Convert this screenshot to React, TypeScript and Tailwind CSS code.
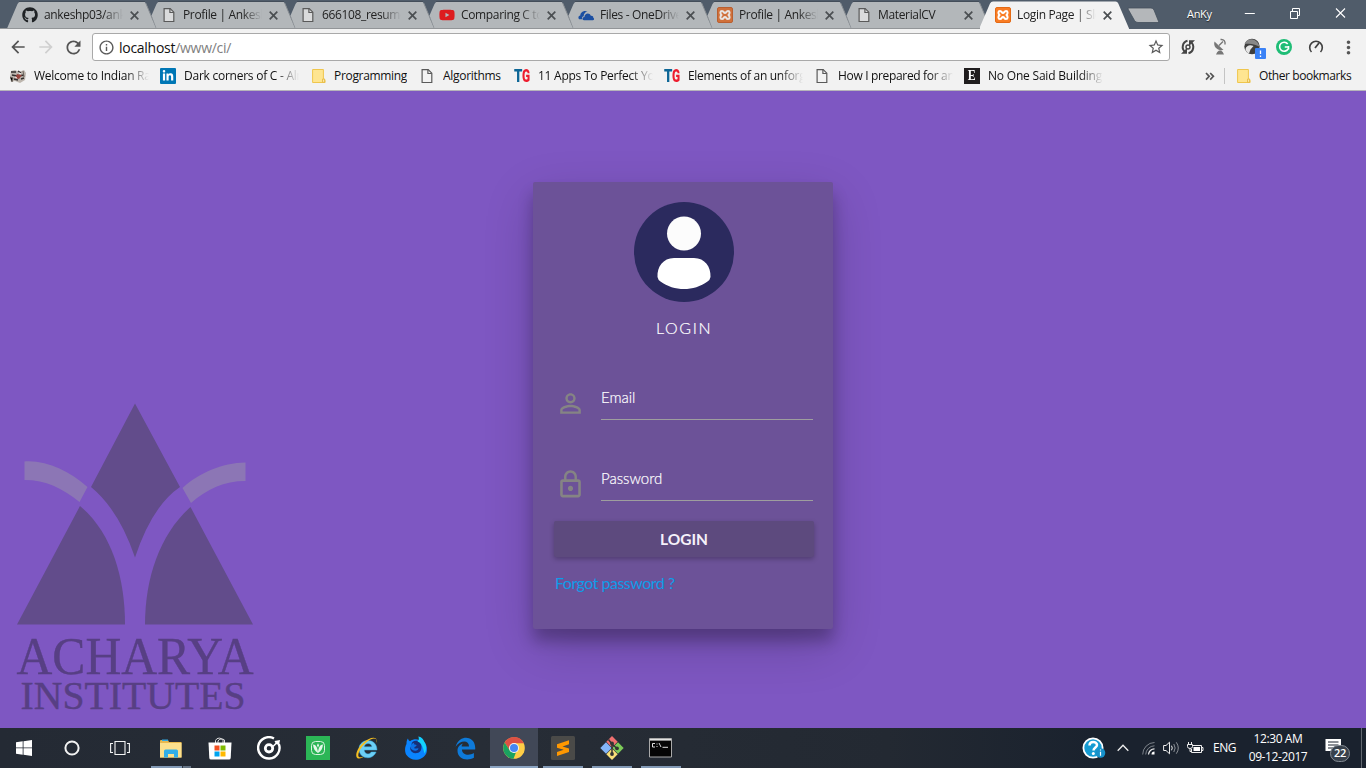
import React from "react";
import { FaGithub, FaYoutube, FaLinkedinIn } from "react-icons/fa";
import {
  MdArrowBack, MdArrowForward, MdRefresh, MdInfoOutline, MdStarBorder,
  MdMoreVert, MdPersonOutline, MdLockOutline,
} from "react-icons/md";

const UI = "font-['Open_Sans','Noto_Sans',sans-serif]";

const PageIcon = () => (
  <svg width="16" height="16" viewBox="0 0 16 16" fill="none" stroke="#5a5a5a" strokeWidth="1.2">
    <path d="M3.1 1.6h6.1l3.6 3.6v9.3H3.1z" fill="#f4f4f4" fillOpacity=".6" />
    <path d="M8.9 1.6v3.9h3.9" />
  </svg>
);

const Xampp = ({ dim = false }: { dim?: boolean }) => (
  <svg width="16" height="16" viewBox="0 0 16 16">
    <rect x=".5" y=".5" width="15" height="15" rx="1.5" fill={dim ? "#d0703a" : "#f97c24"} stroke={dim ? "#b95f30" : "#e46a15"} />
    <g fill="none" stroke={dim ? "#e8e4e1" : "#fff"} strokeWidth="2">
      <path d="M5 4c2 0 1.500 2 3 2s1-2 3-2 2 2.500.6 4c1.400 1.500 1.400 4-.6 4s-1.500-2-3-2-1 2-3 2-2-2.500-.6-4C3 6.500 3 4 5 4z" />
    </g>
  </svg>
);

const OneDrive = () => (
  <svg width="16" height="16" viewBox="0 0 16 16" fill="#1c4fa1">
    <path d="M1.800 12.300C-.3 12 .1 8.800 2.300 8.600 2.300 5.400 5.900 2.700 9.500 4.600 7 5 5.800 7 5.700 9.200c-1.700.4-2.100 2-1.400 3.100z" />
    <path d="M6 13.300c-2.200-.2-1.900-3.100.4-3.200.1-4.200 5.300-5 6.400-1.300 2.300-.2 2.600 1.300 2.400 2 1.300.5 1.100 2.500-.4 2.500z" />
  </svg>
);

const Folder = () => (
  <svg width="14" height="16" viewBox="0 0 14 16" className="ml-[2px]">
    <path d="M.6 1.500h10.800v9.300c1.300.1 1.700.8 1.700 1.800v1.900H.6z" fill="#fee591" stroke="#efc64d" />
    <path d="M10.500 14.300v-3.200h1.900v3.200z" fill="#fff0b5" stroke="#e3b43d" strokeWidth=".8" />
  </svg>
);

const tabs: { title: string; icon: React.ReactNode }[] = [
  { title: "ankeshp03/ankeshp", icon: <FaGithub size={16} color="#1f2225" /> },
  { title: "Profile | Ankesh P", icon: <PageIcon /> },
  { title: "666108_resume_A", icon: <PageIcon /> },
  { title: "Comparing C to m", icon: <FaYoutube size={16} color="#dd1c1f" /> },
  { title: "Files - OneDrive", icon: <OneDrive /> },
  { title: "Profile | Ankesh P", icon: <Xampp dim /> },
  { title: "MaterialCV", icon: <PageIcon /> },
  { title: "Login Page | Slee", icon: <Xampp /> },
];

function Tab({ i }: { i: number }) {
  const active = i === 7;
  const t = tabs[i];
  return (
    <div className={`relative h-[29px] w-[139px] shrink-0 ${active ? "z-[3]" : "z-[1]"}`}>
      <svg className="absolute left-0 top-0" width="152" height="29" viewBox="0 0 152 29">
        {active ? (
          <path d="M-1 29L10 3.500Q11 1.500 13 1.500H135.500Q137.500 1.500 138.300 3.500L149 28.500V29z" fill="#f2f2f2" />
        ) : (
          <>
            <path
              d={i === 0 ? "M0 28.500L10.500 4Q11.500 1.500 14 1.500H136Q138 1.500 139 3.500L149.500 28.500z" : "M5.500 15.500L10.500 4Q11.500 1.500 14 1.500H136Q138 1.500 139 3.500L149.500 28.500H10.500z"}
              fill="#b3b7ba"
            />
            <path d="M138.700 3L149.500 28.500" stroke="#868b90" fill="none" />
            <path d="M12 1.500H138" stroke="#434d59" strokeWidth="1" />
          </>
        )}
      </svg>
      <div className="relative flex h-[29px] items-center pl-[15px] pt-[1px]">
        <span className="flex w-[22px]">{t.icon}</span>
        <span className={`w-[79px] overflow-hidden whitespace-nowrap text-[12px] tracking-[-0.35px] text-[#222] [mask-image:linear-gradient(90deg,#000_75%,transparent)] ${UI}`}>
          {t.title}
        </span>
        <svg className="ml-[7px]" width="9" height="9" viewBox="0 0 9 9" stroke="#4b4f52" strokeWidth="1.700">
          <path d="M.7.7l7.600 7.600M8.300.7L.7 8.300" />
        </svg>
      </div>
    </div>
  );
}

const TG = () => (
  <span className="flex font-['Roboto',sans-serif] text-[18px] leading-[16px] font-black">
    <span className="inline-block w-[8px] origin-left scale-x-[.74] text-[#0d6696]">T</span>
    <span className="inline-block w-[8px] origin-left scale-x-[.66] text-[#ed1c2e]">G</span>
  </span>
);

const Train = () => (
  <svg width="16" height="14" viewBox="0 0 16 14">
    <path d="M1 2l4-1 4 2 5-2 2 3-1 7-5 3-5-2-4 1L0 9z" fill="#bdb6ae" />
    <path d="M1 3h5M8 2l3 2M2 6l5 1M9 7l5-1M4 10l4 1M11 10l3-1" stroke="#33302f" strokeWidth="1.500" />
    <path d="M7 5l5 1-3 4-4-1z" fill="#96433c" />
    <path d="M0 8l3 1-1 4M13 2l1 6" stroke="#6b625b" />
    <path d="M9 4l2 1M5 8l2 1" stroke="#fff" />
  </svg>
);

const EIcon = () => (
  <span className="flex h-[16px] w-[16px] items-center justify-center bg-[#201d1e] font-['Liberation_Serif',serif] text-[14px] leading-none font-bold text-white">
    <span className="scale-x-[.85]">E</span>
  </span>
);

const bookmarks = [
  { w: "w-[150px]", t: "Welcome to Indian Rail", icon: <Train />, fade: true, ls: "tracking-[-0.25px]" },
  { w: "w-[150px]", t: "Dark corners of C - Alm", icon: <span className="flex h-[16px] w-[16px] items-center justify-center rounded-[1px] bg-[#0077b5]"><FaLinkedinIn size={12} color="#fff" /></span>, fade: true, ls: "tracking-[-0.25px]" },
  { w: "w-[109px]", t: "Programming", icon: <Folder />, fade: false, ls: "tracking-[-0.32px]" },
  { w: "w-[95px]", t: "Algorithms", icon: <PageIcon />, fade: false, ls: "tracking-[-0.3px]" },
  { w: "w-[150px]", t: "11 Apps To Perfect Your", icon: <TG />, fade: true, ls: "tracking-[-0.25px]" },
  { w: "w-[150px]", t: "Elements of an unforgett", icon: <TG />, fade: true, ls: "tracking-[-0.3px]" },
  { w: "w-[150px]", t: "How I prepared for an int", icon: <PageIcon />, fade: true, ls: "tracking-[-0.33px]" },
  { w: "w-[150px]", t: "No One Said Building a", icon: <EIcon />, fade: true, ls: "tracking-[-0.2px]" },
];

function Browser() {
  return (
    <header className="shrink-0">
      <div className="flex h-[29px] bg-[#505c6a] pl-[7px]">
        <div className="relative flex shrink-0">
          {tabs.map((_, i) => <Tab key={i} i={i} />)}
          <div className="absolute bottom-0 left-[-7px] z-[2] h-px w-[981px] bg-[#929598]" />
        </div>
        <svg className="ml-[7px] mt-[7px] shrink-0" width="35" height="17" viewBox="0 0 35 17">
          <path d="M3 1H25Q27 1 28 3L33 15.500H12Q9.500 15.500 8.500 13.500L2 2Q1.500 1 3 1z" fill="#b4b7ba" stroke="#444f5c" strokeWidth=".8" />
        </svg>
        <div className="flex flex-1 items-start">
          <span className={`ml-[26px] mt-[6px] w-[57px] shrink-0 text-[11px] leading-[16px] font-medium tracking-[-0.3px] text-white [text-shadow:0_1px_1px_#222] ${UI}`}>AnKy</span>
          <svg className="mt-[7px] shrink-0" width="110" height="14" viewBox="0 0 110 14" fill="none" stroke="#fff">
            <path d="M.8 6.500h10" />
            <path d="M46.500 4.500h7v7h-7zM48.500 4v-2.500h7v7h-2" />
            <path d="M92 1.500l9 9M101 1.500l-9 9" strokeWidth="1.100" />
          </svg>
        </div>
      </div>
      <div className="flex h-[33px] items-center bg-[#f2f2f2] pt-[3px] pl-[8px]">
        <MdArrowBack size={20} color="#545454" />
        <MdArrowForward size={20} color="#cfcfcf" className="ml-[8px]" />
        <MdRefresh size={21} color="#545454" className="ml-[7px]" />
        <div className="ml-[8px] flex h-[28px] w-[1078px] items-center rounded-[3px] border border-[#a9a9a9] bg-white pl-[5px]">
          <MdInfoOutline size={17} color="#5a5a5a" />
          <span className={`ml-[4px] flex-1 text-[14px] tracking-[-0.28px] text-[#111] ${UI}`}>localhost<span className="text-[#808080]">/www/ci/</span></span>
          <MdStarBorder size={18} color="#5a5a5a" className="mr-[4px]" />
        </div>
        <svg className="ml-[10px]" width="177" height="24" viewBox="0 0 177 24">
          <g fill="none" stroke="#454545" strokeWidth="2">
            <path d="M5.300 17A6.300 6.300 0 0 1 7.500 5.800" />
            <path d="M10.700 7A6.300 6.300 0 0 1 8.500 18.200" />
            <circle cx="8" cy="12" r="2" strokeWidth="1.400" />
          </g>
          <path d="M1 18.800h6V13zM15 5.200H9V11z" fill="#454545" />
          <path d="M34.500 6.500c-1.500 5 2.500 9.500 9 8.500zM36 19.500q1-3 3-4h2q2 1 3 4z" fill="#777" />
          <path d="M39 10.500l4-4M40.500 4.500c3.500-.5 5 2 4.500 5" stroke="#777" fill="none" strokeWidth="1.400" />
          <circle cx="72" cy="11.500" r="7.700" fill="#3e3e3e" />
          <path d="M64.500 9c2-6 10-6.500 13.500-1l2 4c-4-2.500-9-4-15.500-3z" fill="#888" />
          <path d="M65.500 14c1-4 5-4.500 8-3l-3 3.500-1.500 4c-2-1-3-2.500-3.500-4.500z" fill="#e4e4e4" />
          <rect x="75" y="13" width="11" height="11" rx="1" fill="#3b82f6" />
          <path d="M80.500 15.500v3.500M80.500 20.500v1.500" stroke="#fff" strokeWidth="1.300" />
          <circle cx="104" cy="12" r="8" fill="#1fbd76" />
          <path d="M107.700 9A4.500 4.500 0 1 0 108 14M108.500 11v3.500M108.800 12h-4" stroke="#fff" fill="none" strokeWidth="1.600" />
          <path d="M131.500 17A6.300 6.300 0 1 1 140.500 17" stroke="#404040" fill="none" strokeWidth="1.600" />
          <path d="M135 13l4-5" stroke="#404040" strokeWidth="1.800" />
        </svg>
        <MdMoreVert size={21} color="#555" className="ml-[-19px] shrink-0" />
      </div>
      <div className="flex h-[29px] items-center border-b border-[#b6b4ba] bg-[#f2f2f2] pl-[10px]">
        {bookmarks.map((b, i) => (
          <div key={i} className={`flex shrink-0 items-center ${b.w}`}>
            <span className="flex w-[24px] shrink-0">{b.icon}</span>
            <span className={`overflow-hidden whitespace-nowrap text-[12px] text-[#111] ${b.ls} ${UI} ${b.fade ? "w-[115px] [mask-image:linear-gradient(90deg,#000_80%,transparent)]" : ""}`}>{b.t}</span>
          </div>
        ))}
        <svg className="ml-[91px]" width="10" height="9" viewBox="0 0 10 9" fill="none" stroke="#555" strokeWidth="1.700">
          <path d="M1 1l3.200 3.300L1 7.600M5.200 1l3.200 3.300-3.200 3.300" />
        </svg>
        <span className="ml-[9px] mr-[10px] h-[16px] w-px bg-[#c4c4c4]" />
        <Folder />
        <span className={`ml-[8px] whitespace-nowrap text-[12px] tracking-[-0.42px] text-[#111] ${UI}`}>Other bookmarks</span>
      </div>
    </header>
  );
}

function Logo() {
  return (
    <svg className="mb-[10px] ml-[10px] self-end" width="260" height="320" viewBox="10 398 260 320">
      <g fill="#624c8b">
        <path d="M135 403.500L180 487Q152 506 135 557.500Q119 510 91 487z" />
        <path d="M80 506C111 532 125 576 125 624.500H17z" />
        <path d="M190.500 507L253 624.500H145C145 578 160 534 190.500 507z" />
      </g>
      <g fill="#8c76b5">
        <path d="M24.500 461.500C47 460 69 471 87.500 487L79.500 502C62 488 46 480 24.500 480z" />
        <path d="M245.500 462.500C222 463 199 473 182.500 488L191 503C207 489 224 481 245.500 481z" />
      </g>
      <g fill="#573f84" stroke="#573f84" strokeWidth=".4" fontFamily="'Liberation Serif', serif">
        <text x="16.500" y="674" fontSize="53" textLength="237" lengthAdjust="spacingAndGlyphs">ACHARYA</text>
        <text x="20.500" y="708.500" fontSize="40.500" textLength="225" lengthAdjust="spacingAndGlyphs">INSTITUTES</text>
      </g>
    </svg>
  );
}

function Field({ label, icon }: { label: string; icon: React.ReactNode }) {
  return (
    <div className="flex h-[45px] w-[260px]">
      <span className="flex w-[48px] items-center pl-[2px] pt-[11px]">{icon}</span>
      <label className="flex h-[45px] flex-1 items-center border-b border-[#9e9e9e] pt-[1px] font-['Lato',sans-serif] text-[15px] font-light text-white [-webkit-text-stroke:0.2px_#fff]">{label}</label>
    </div>
  );
}

function LoginCard() {
  return (
    <section className="mt-[91px] flex h-[447px] w-[300px] flex-col items-start rounded-[2px] bg-[#6c5298] pt-[20px] pl-[21px] font-['Lato',sans-serif] shadow-[0_12px_15px_0_rgba(0,0,0,0.24),0_17px_50px_0_rgba(0,0,0,0.19)]">
      <svg className="ml-[80px]" width="100" height="100" viewBox="0 0 100 100">
        <circle cx="50" cy="50" r="50" fill="#2b2a5e" />
        <circle cx="50" cy="31.500" r="17" fill="#fcfcfc" />
        <path d="M40 56H60C71 56 77 65 76.500 75Q76 78 73.500 79.500C60 89.500 40 89.500 26.500 79.500Q24 78 23.500 75C23 65 29 56 40 56z" fill="#fff" />
      </svg>
      <h1 className="mt-[16px] ml-[102px] text-[16px] leading-[20px] font-light tracking-[1.6px] text-white [-webkit-text-stroke:0.2px_#fff]">LOGIN</h1>
      <div className="mt-[37px] ml-[-1px]"><Field label="Email" icon={<MdPersonOutline size={31} color="#858484" />} /></div>
      <div className="mt-[36px] ml-[-1px]"><Field label="Password" icon={<MdLockOutline size={31} color="#858484" />} /></div>
      <button className="mt-[20px] h-[36px] w-[260px] rounded-[2px] bg-[#5d4a7e] pt-[2px] text-[15.500px] font-bold text-[#f5f1fa] shadow-[0_2px_5px_rgba(0,0,0,0.26)]">LOGIN</button>
      <a className="mt-[15px] ml-[1px] text-[16px] leading-[22px] tracking-[-0.5px] text-[#0f9ce8]">Forgot password ?</a>
    </section>
  );
}

const Explorer = () => (
  <svg width="22" height="19" viewBox="0 0 22 19">
    <path d="M0 2Q0 1 1 1H8l1 2H21.500V18.500H0z" fill="#e9b94e" />
    <path d="M0 4H21.500V18.500H0z" fill="#fce08d" />
    <path d="M2 .5h6v1.500H2z" fill="#35a6df" />
    <path d="M4 18.500V12Q4 10.500 5.500 10.500H16.500Q18 10.500 18 12V18.500H14V15H8V18.500z" fill="#31aee8" />
  </svg>
);
const Store = () => (
  <svg width="24" height="24" viewBox="0 0 24 24">
    <path d="M7.500 7V4.500a4 3.700 0 0 1 7.500 0V7M10 7V5a4 3.500 0 0 1 6.500-1V7" fill="none" stroke="#ddd" strokeWidth="1" />
    <path d="M.5 6.500h23L22.700 22Q22.500 23.500 21 23.500H3Q1.500 23.500 1.300 22z" fill="#fff" />
    <path d="M6.500 9.500h5v5h-5z" fill="#f25022" /><path d="M12.500 9.500h5v5h-5z" fill="#7fba00" />
    <path d="M6.500 15.500h5v5h-5z" fill="#00a4ef" /><path d="M12.500 15.500h5v5h-5z" fill="#ffb900" />
  </svg>
);
const Groove = () => (
  <svg width="24" height="24" viewBox="0 0 24 24" fill="none" stroke="#fff">
    <path d="M21.800 8A10.700 10.700 0 1 1 17 2.500" strokeWidth="2.400" />
    <circle cx="12" cy="12.300" r="3.700" strokeWidth="2.800" />
    <path d="M16 10.500L20 6.500" strokeWidth="1.600" />
    <path d="M17.500 5l5.500-1-1 5-3-1z" fill="#fff" stroke="none" />
  </svg>
);
const Saavn = () => (
  <svg width="24" height="24" viewBox="0 0 24 24">
    <path d="M0 0h24v24H0z" fill="#2bb656" />
    <rect x="5.500" y="5.500" width="13" height="13" rx="4" fill="none" stroke="#d9f3e0" strokeWidth="1" />
    <path d="M7 8.500c3 0 4.500 3.500 5 7.500.5-4 2-7.500 5-7.500-.3 4-2 7-5 8.500-3-1.500-4.700-4.500-5-8.500z" fill="#e4f8e9" />
    <path d="M12 7.300l1 2-1 2.500-1-2.500z" fill="#e4f8e9" />
  </svg>
);
const IE = () => (
  <svg width="24" height="24" viewBox="0 0 24 24">
    <path d="M22 14H9.200c.3 4.500 5.600 5 7 2h4.900C17.500 25 4 23 4 13 4 2 22 1 22 14zM9.300 10.800h7.600c-.5-4.300-7-4.300-7.600 0z" fill="#6ccff6" stroke="#38aee3" strokeWidth=".5" />
    <path d="M21.500 7C24-1 14 1 8 7 1 13-1 23 4 22.500c2 0 4-1.200 5.500-2.300C5 22 2.500 22 3.500 17.500 5 11 17-1 21.500 3.500z" fill="#f5bf21" />
  </svg>
);
const Firefox = () => (
  <svg width="24" height="24" viewBox="0 0 24 24">
    <path d="M2.500 8C2.300 5 3.500 3 4 2.500c.3 1.500 1 2.300 2 2.800C9 3 13 3 15 4c.3-1.500 0-2.500-.5-3.500 3 .8 5 2.700 5.500 5.500 3.500 3 3.500 9 2 12-4 7-15 8-19.500 1C.5 16 .7 11 2.500 8z" fill="#0a84ff" />
    <path d="M8.500 6c2-1.800 5.500-1.500 7.500.5 2 2.500 2 6 .5 8.500-2 2.500-6 3-8.500 1-1.500-1.200-2-3-1.700-4.500l1.200-1.500C7.300 8.500 7.700 7 8.500 6z" fill="#173078" />
    <path d="M8.500 7.500l1.700-.7-.2 1.500 2.700.8c-.2 1.400-1.700 1.500-2.400 2.400l.2 1c1.500.2 2.700-.5 4-.3-.3 2.500-3.300 3.300-6.300 1.500-2-1.500-2-3-1.300-4.500z" fill="#0c71e6" />
    <path d="M14.500.5c4 1 5 4 6 5.500 2.500 4 2 9 0 11.500C19 11 17 6 13.500 5.500c1.500-1 1.500-3 1-5z" fill="#14d3fb" />
  </svg>
);
const Edge = () => (
  <svg width="21" height="23" viewBox="0 0 21 23">
    <path d="M.6 9.800C3 1.500 10-.2 14 1.300c5 1.700 6.500 6.500 6.200 11.200H6.900c.4 6 7.600 6.500 12 3.600v4.600C12 24.500 2.300 22 2.500 13.400 2.500 10 5 7.500 8 6.500c-1 1-1.400 2.200-1.300 3H14C14.200 2.500 5 3 .6 9.800z" fill="#0e7ad9" />
  </svg>
);
const Chrome = () => (
  <svg width="22" height="22" viewBox="0 0 22 22">
    <circle cx="11" cy="11" r="10.800" fill="#ffcd46" />
    <path d="M1.600 5.600A10.800 10.800 0 0 1 20.400 5.600L21 6.200H11L6.800 13.500z" fill="#dd5144" />
    <path d="M1.650 5.600L6.800 13.500 11 15.800 13 15.200 10.500 21.800A10.800 10.800 0 0 1 1.650 5.600z" fill="#1aa260" />
    <circle cx="11" cy="11" r="5" fill="#f4f4f4" /><circle cx="11" cy="11" r="4" fill="#4687f4" />
  </svg>
);
const Sublime = () => (
  <svg width="24" height="24" viewBox="0 0 24 24">
    <rect width="24" height="24" rx="1.500" fill="#4a4a48" />
    <path d="M6 8.300l12-4.100v4l-6.500 2.200L18 12.500v3.600L6 20v-4l6.700-2.200L6 11.800z" fill="#ff9800" />
  </svg>
);
const Git = () => (
  <svg width="24" height="24" viewBox="0 0 24 24">
    <path d="M12 0l5.700 5.800L12 11.500 6.300 5.800z" fill="#f07070" />
    <path d="M6 6.200l5.700 5.800L6 17.700.3 12z" fill="#84b5f8" />
    <path d="M18 6.200l5.700 5.800-5.700 5.700-5.700-5.700z" fill="#7dcb59" />
    <path d="M12 12.500l5.700 5.700L12 24l-5.700-5.800z" fill="#fae079" />
    <path d="M12 7v11M12 8l5 4.500M8.500 3.500L12 8" stroke="#343434" strokeWidth="1.500" fill="none" />
    <circle cx="12" cy="7.500" r="1.900" fill="#343434" /><circle cx="12" cy="18" r="1.900" fill="#343434" /><circle cx="17" cy="12.300" r="1.900" fill="#343434" />
  </svg>
);
const Cmd = () => (
  <svg width="23" height="20" viewBox="0 0 23 20" className="mr-[2px]">
    <path d="M.5.500h22v18.500H.5z" fill="#050505" stroke="#a9a9a9" />
    <path d="M1 1h21v1.600H1z" fill="#e2e2e2" />
    <path d="M6 5.500H3.500v3.500H6M8 5.500v1M8 8v1M10 5l2 4M13.500 9.300H19" stroke="#dcdcdc" fill="none" />
  </svg>
);

const apps = [<Explorer />, <Store />, <Groove />, <Saavn />, <IE />, <Firefox />, <Edge />, <Chrome />, <Sublime />, <Git />, <Cmd />];

function Taskbar() {
  return (
    <footer className="flex h-[40px] shrink-0 items-stretch bg-[linear-gradient(90deg,#242a34,#272d36_35%,#232932_65%,#1a222e_80%)]">
      <div className="flex w-[48px] items-center justify-center">
        <svg width="16" height="16" viewBox="0 0 16 16" fill="#fff"><path d="M0 2.300L6.700 1.300V7.500H0zM7.500 1.200L16 0V7.500H7.500zM0 8.300H6.700V14.700L0 13.700zM7.500 8.300H16V16L7.500 14.800z" /></svg>
      </div>
      <div className="flex w-[48px] items-center justify-center">
        <svg width="16" height="16" viewBox="0 0 16 16"><circle cx="8" cy="8" r="6.600" fill="none" stroke="#f2f2f2" strokeWidth="2" /></svg>
      </div>
      <div className="flex w-[51px] items-center pl-[14px]">
        <svg width="20" height="14" viewBox="0 0 20 14" fill="none" stroke="#f4f4f4" strokeWidth="1.100"><path d="M5 .5h10v13H5zM3 2.500H.6v9H3M17 2.500h2.400v9H17" /></svg>
      </div>
      {apps.map((a, i) => (
        <div key={i} className={`mr-px flex w-[48px] flex-col items-center ${i === 7 ? "bg-[#414857]" : ""}`}>
          <span className="flex flex-1 items-center">{a}</span>
          <span className={`mt-[-2px] flex h-[2px] ${i === 7 ? "w-[48px] bg-[#8ba4c2]" : i === 0 || i > 7 ? "w-[40px] bg-[#8299b5]" : "w-0"}`}>
            {i === 0 && <span className="ml-auto w-[9px] border-l border-[#303741] bg-[#667486]" />}
          </span>
        </div>
      ))}
      <div className={`ml-auto flex items-center text-white ${UI}`}>
        <svg width="24" height="24" viewBox="0 0 24 24">
          <circle cx="11" cy="12" r="9.600" fill="#159bd2" stroke="#fff" strokeWidth="1.800" />
          <path d="M7.500 9.500c0-5 7.500-4.500 7.500-.5 0 2.500-3.500 2.500-3.500 5.500" fill="none" stroke="#fff" strokeWidth="2.500" /><circle cx="11.300" cy="17.500" r="1.500" fill="#fff" />
          <circle cx="18.500" cy="17" r="4.800" fill="#1791ca" /><path d="M18.500 15.800v4M18.500 13.500v1" stroke="#fff" strokeWidth="1.200" />
        </svg>
        <svg className="ml-[11px]" width="12" height="8" viewBox="0 0 12 8" fill="none" stroke="#eee" strokeWidth="1.300"><path d="M.7 6.700L6 1.200l5.300 5.500" /></svg>
        <svg className="ml-[13px]" width="13" height="14" viewBox="0 0 13 14" fill="none"><path d="M.7 13.500A12 12 0 0 1 12.500 1.500M3.700 13.500A9 9 0 0 1 12.500 4.800" stroke="#7d838a" /><path d="M6.500 13.500a6 6 0 0 1 6-5.700" stroke="#eee" strokeWidth="1.200" /><path d="M9.500 13.500a3 3 0 0 1 3-3v3z" fill="#fff" /></svg>
        <svg className="ml-[8px]" width="17" height="14" viewBox="0 0 17 14" fill="none" stroke="#eee"><path d="M.6 4.500H3L6.500 1.200v11.600L3 9.500H.6zM8.500 4.700q1.500 2.300 0 4.600" /><path d="M10.800 3q2.700 4 0 8M13.300 1.300q4 5.700 0 11.400" stroke="#8b9096" /></svg>
        <svg className="ml-[7px]" width="17" height="14" viewBox="0 0 17 14" fill="none" stroke="#eee"><path d="M6 4.500h8.500v7H4.500V8M14.500 6.500h1.500v3h-1.500M1.500 1v2M4.500 1v2M.5 3.500h5v2Q5.500 7.500 3 7.500T.5 5.500zM3 7.500v3h1.500" /><path d="M6.500 6h6.500v4H6.500z" fill="#fff" stroke="none" /></svg>
        <span className="ml-[9px] w-[25px] text-[12px] tracking-[-0.5px]">ENG</span>
        <span className="ml-[7px] w-[66px] text-center text-[12px] leading-[18px] tracking-[-0.4px] whitespace-nowrap">12:30 AM<br />09-12-2017</span>
        <div className="relative ml-[14px] h-[24px] w-[27px]">
          <svg width="17" height="18" viewBox="0 0 17 18"><path d="M.5 3h15.500v12H10v3l-3-3H.5z" fill="#fff" /><path d="M3 6h10.500M3 9h10.500M3 12h6" stroke="#1b232e" /></svg>
          <span className="absolute left-[5px] top-[9px] flex h-[17px] w-[20px] items-center justify-center rounded-full border border-[#858c94] bg-[#38414c] text-[11px] tracking-[-0.3px] font-semibold">22</span>
        </div>
        <span className="ml-[9px] mr-[4px] h-[40px] w-px bg-[#626870]" />
      </div>
    </footer>
  );
}

export default function App() {
  return (
    <div className="flex h-[768px] w-[1366px] flex-col overflow-hidden bg-[#7e57c2]">
      <Browser />
      <main className="grid h-[637px] grid-cols-[533px_300px_533px] items-start overflow-hidden bg-[#7e57c2]">
        <div className="flex h-[637px]"><Logo /></div>
        <LoginCard />
      </main>
      <Taskbar />
    </div>
  );
}
